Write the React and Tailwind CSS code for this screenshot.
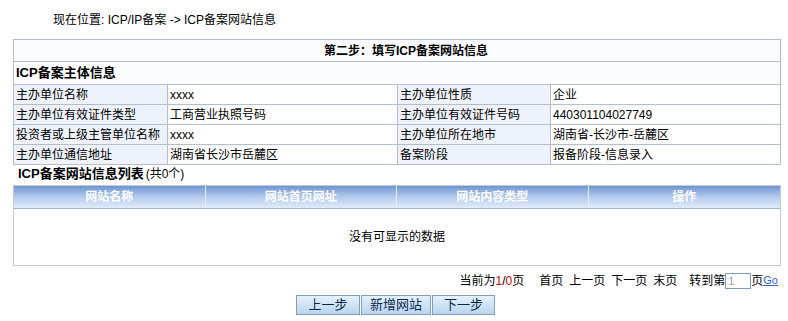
export default function App() {
    const info = [
        ['主办单位名称', 'xxxx', '主办单位性质', '企业'],
        ['主办单位有效证件类型', '工商营业执照号码', '主办单位有效证件号码', '440301104027749'],
        ['投资者或上级主管单位名称', 'xxxx', '主办单位所在地市', '湖南省-长沙市-岳麓区'],
        ['主办单位通信地址', '湖南省长沙市岳麓区', '备案阶段', '报备阶段-信息录入'],
    ];
    const cols = ['网站名称', '网站首页网址', '网站内容类型', '操作'];
    const font = { fontFamily: '"Liberation Sans", "Noto Sans CJK SC", sans-serif' };
    const btn = 'h-[20px] px-0 whitespace-nowrap border border-[#7f9db9] bg-gradient-to-b from-[#e6f1fb] to-[#b9d5ee] text-[13px] text-[#0b2a4a] leading-[18px]';

    return (
        <div className="w-[788px] h-[321px] bg-white text-[12px] text-black overflow-hidden" style={font}>
            <div className="h-[39px] pl-[53px] pt-[12px] text-[12px] leading-[16px]">
                现在位置: ICP/IP备案 -&gt; ICP备案网站信息
            </div>

            <div className="mx-[13px] w-[768px]">
                <table className="w-full border-collapse border border-[#b4bfcc] table-fixed">
                    <colgroup>
                        <col className="w-[154px]" />
                        <col className="w-[230px]" />
                        <col className="w-[153px]" />
                        <col />
                    </colgroup>
                    <tbody>
                        <tr className="h-[22px]">
                            <td colSpan={4} className="border border-[#b4bfcc] bg-[#fbfcfe] text-center font-bold text-[12px] pl-[18px]">
                                第二步：填写ICP备案网站信息
                            </td>
                        </tr>
                        <tr className="h-[23px]">
                            <td colSpan={4} className="border border-[#b4bfcc] bg-[#fbfcfe] font-bold text-[13px] px-[2px]">
                                ICP备案主体信息
                            </td>
                        </tr>
                        {info.map((r, i) => (
                            <tr key={i} className="h-[20px] leading-[18px]">
                                <td className="border border-[#b4bfcc] bg-[#eef3fb] px-[2px] whitespace-nowrap overflow-hidden">{r[0]}</td>
                                <td className="border border-[#b4bfcc] px-[2px] whitespace-nowrap">{r[1]}</td>
                                <td className="border border-[#b4bfcc] bg-[#eef3fb] px-[2px] whitespace-nowrap">{r[2]}</td>
                                <td className="border border-[#b4bfcc] px-[2px] whitespace-nowrap">{r[3]}</td>
                            </tr>
                        ))}
                    </tbody>
                </table>

                <div className="h-[20px] flex items-end pl-[5px] pb-[2px]">
                    <span className="font-bold text-[13px]">ICP备案网站信息列表</span>
                    <span className="ml-[2px]">(共0个)</span>
                </div>

                <div className="border border-[#c2c9d3]">
                    <div className="grid grid-cols-4 h-[23px] bg-gradient-to-b from-[#6f95d2] via-[#b4cbee] to-[#e2ebf9] border-b border-[#9fb6d6]">
                        {cols.map((c, i) => (
                            <div key={c} className={`flex items-center justify-center font-bold text-white ${i < 3 ? 'border-r border-[#e8eef8]' : ''}`}>
                                {c}
                            </div>
                        ))}
                    </div>
                    <div className="h-[56px] flex items-center justify-center">
                        没有可显示的数据
                    </div>
                </div>

                <div className="h-[29px] flex items-center justify-end pr-[3px]">
                    <span>当前为<span className="text-[#c00]">1</span>/<span className="text-[#c00]">0</span>页</span>
                    <span className="ml-[15px]">首页</span>
                    <span className="ml-[6px]">上一页</span>
                    <span className="ml-[6px]">下一页</span>
                    <span className="ml-[6px]">末页</span>
                    <span className="ml-[12px] flex items-center">
                        转到第
                        <span className="inline-block w-[26px] h-[16px] border border-[#7f9db9] text-[#999] text-[11px] leading-[14px] pl-[2px]">1</span>
                        页<span className="text-[11px] text-[#3366cc] underline">Go</span>
                    </span>
                </div>

                <div className="flex justify-center gap-[1px] pr-[3px]">
                    <button className={`${btn} w-[64px]`}>上一步</button>
                    <button className={`${btn} w-[70px]`}>新增网站</button>
                    <button className={`${btn} w-[63px]`}>下一步</button>
                </div>
            </div>
        </div>
    );
}
